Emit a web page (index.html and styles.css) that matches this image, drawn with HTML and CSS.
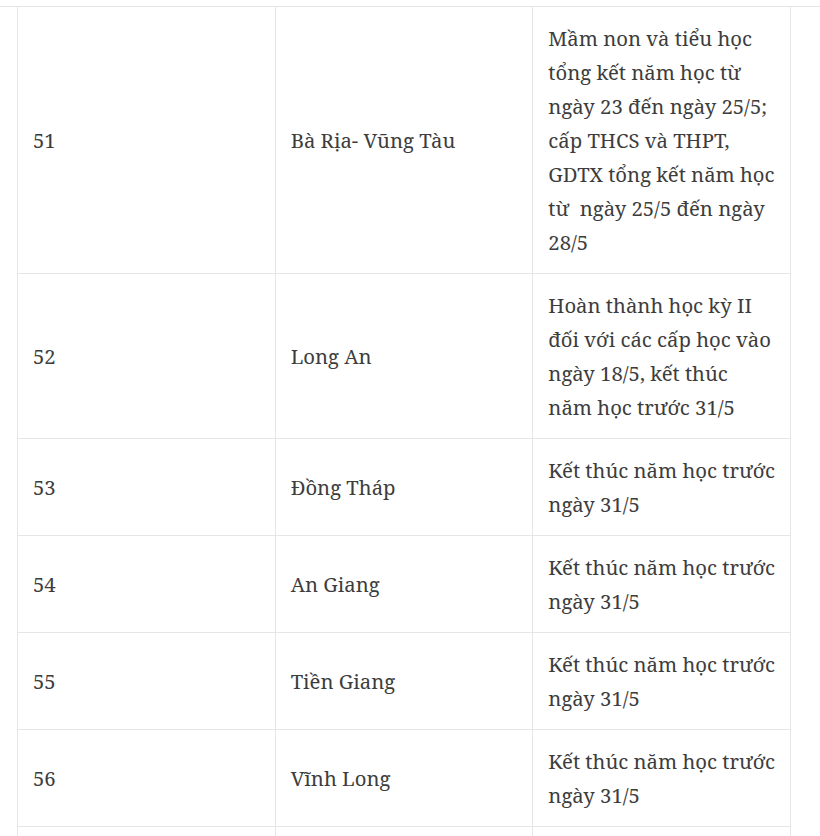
FILE: index.html
```html
<!DOCTYPE html>
<html lang="vi">
<head>
<meta charset="utf-8">
<title>Lịch kết thúc năm học</title>
<link rel="stylesheet" href="styles.css">
</head>
<body>
<div class="page">
  <table class="schedule">
    <tbody>
      <tr>
        <td>51</td>
        <td>Bà Rịa- Vũng Tàu</td>
        <td>Mầm non và tiểu học tổng kết năm học từ ngày 23 đến ngày 25/5; cấp THCS và THPT, GDTX tổng kết năm học từ&nbsp; ngày 25/5 đến ngày 28/5</td>
      </tr>
      <tr>
        <td>52</td>
        <td>Long An</td>
        <td>Hoàn thành học kỳ II đối với các cấp học vào ngày 18/5, kết thúc năm học trước 31/5</td>
      </tr>
      <tr>
        <td>53</td>
        <td>Đồng Tháp</td>
        <td>Kết thúc năm học trước ngày 31/5</td>
      </tr>
      <tr>
        <td>54</td>
        <td>An Giang</td>
        <td>Kết thúc năm học trước ngày 31/5</td>
      </tr>
      <tr>
        <td>55</td>
        <td>Tiền Giang</td>
        <td>Kết thúc năm học trước ngày 31/5</td>
      </tr>
      <tr>
        <td>56</td>
        <td>Vĩnh Long</td>
        <td>Kết thúc năm học trước ngày 31/5</td>
      </tr>
      <tr class="next">
        <td></td>
        <td></td>
        <td></td>
      </tr>
    </tbody>
  </table>
</div>
</body>
</html>
```

FILE: styles.css
```css
html, body {
  margin: 0;
  padding: 0;
  background: #ffffff;
}

.page {
  margin-top: 6px;
  border-top: 1px solid #e6e6e6;
  padding-left: 17px;
}

.schedule {
  width: 774px;
  border-collapse: collapse;
  table-layout: fixed;
  font-family: "Noto Serif", "DejaVu Serif", serif;
  font-size: 20.3px;
  line-height: 34px;
  color: #3d3d3d;
}

.schedule td {
  border: 1px solid #e6e6e6;
  padding: 14px 14px 14px 15px;
  vertical-align: middle;
  text-align: left;
}

.schedule tr:first-child td {
  border-top: none;
}

.schedule .next td {
  height: 40px;
}
```
